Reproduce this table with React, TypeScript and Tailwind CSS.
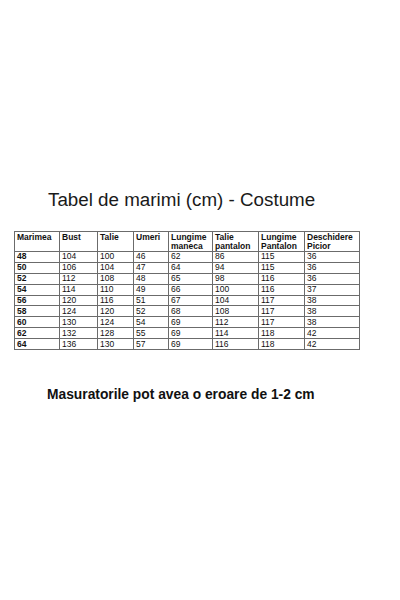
const cols = [
  { label: ["Marimea"], w: 45 },
  { label: ["Bust"], w: 38 },
  { label: ["Talie"], w: 36 },
  { label: ["Umeri"], w: 35 },
  { label: ["Lungime", "maneca"], w: 44 },
  { label: ["Talie", "pantalon"], w: 46 },
  { label: ["Lungime", "Pantalon"], w: 46 },
  { label: ["Deschidere", "Picior"], w: 55 },
];

const rows = [
  ["48", "104", "100", "46", "62", "86", "115", "36"],
  ["50", "106", "104", "47", "64", "94", "115", "36"],
  ["52", "112", "108", "48", "65", "98", "116", "36"],
  ["54", "114", "110", "49", "66", "100", "116", "37"],
  ["56", "120", "116", "51", "67", "104", "117", "38"],
  ["58", "124", "120", "52", "68", "108", "117", "38"],
  ["60", "130", "124", "54", "69", "112", "117", "38"],
  ["62", "132", "128", "55", "69", "114", "118", "42"],
  ["64", "136", "130", "57", "69", "116", "118", "42"],
];

export default function App() {
  return (
    <main className="min-h-[600px] w-[400px] bg-white font-['Liberation_Sans',Arial,sans-serif] text-[#111]">
      <h1 className="pl-[48px] pt-[188px] text-[18.8px] font-normal leading-[24px] text-[#1a1a1a]">
        Tabel de marimi (cm) - Costume
      </h1>

      <table className="ml-[14px] mt-[19px] table-fixed border-collapse text-[8.5px] leading-[9px]">
        <colgroup>
          {cols.map((c, i) => (
            <col key={i} style={{ width: c.w }} />
          ))}
        </colgroup>
        <thead>
          <tr className="h-[20px]">
            {cols.map((c, i) => (
              <th
                key={i}
                className="border border-[#6b6b6b] px-[2px] pt-[1px] text-left align-top font-bold"
              >
                {c.label.map((l, j) => (
                  <div key={j}>{l}</div>
                ))}
              </th>
            ))}
          </tr>
        </thead>
        <tbody>
          {rows.map((r, i) => (
            <tr key={i} className="h-[10.9px]">
              {r.map((v, j) => (
                <td
                  key={j}
                  className={`border border-[#6b6b6b] px-[2px] py-0 align-middle ${j === 0 ? "font-bold" : "font-normal"}`}
                >
                  {v}
                </td>
              ))}
            </tr>
          ))}
        </tbody>
      </table>

      <p className="pl-[47px] pt-[37px] text-[13.8px] font-bold leading-[16px] text-[#111]">
        Masuratorile pot avea o eroare de 1-2 cm
      </p>
    </main>
  );
}
